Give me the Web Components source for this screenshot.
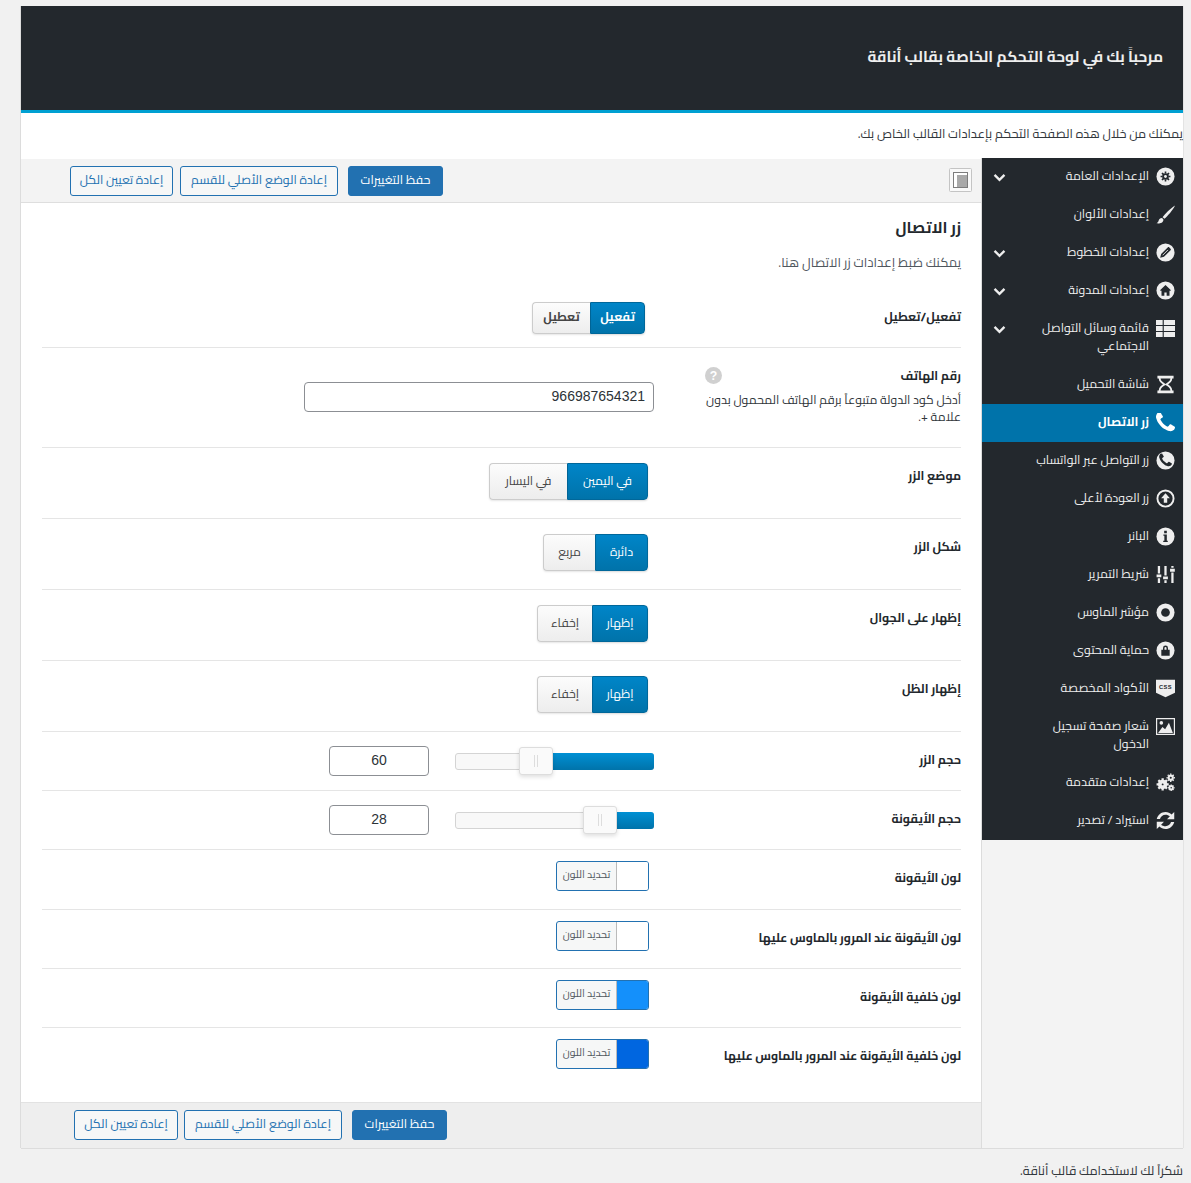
<!DOCTYPE html>
<html lang="ar" dir="rtl">
<head>
<meta charset="utf-8">
<title>لوحة التحكم</title>
<style>
  html, body { margin: 0; background: #f1f1f1; }
  body { font: 13px/18px Cairo, "Noto Sans Arabic", "DejaVu Sans", sans-serif; color: #23282d; }
</style>
</head>
<body>
<panel-page>
  <span slot="title">مرحباً بك في لوحة التحكم الخاصة بقالب أناقة</span>
  <span slot="intro">يمكنك من خلال هذه الصفحة التحكم بإعدادات القالب الخاص بك.</span>
  <side-menu slot="menu">
    <side-item icon="gear" arrow>الإعدادات العامة</side-item>
    <side-item icon="brush">إعدادات الألوان</side-item>
    <side-item icon="pencil" arrow>إعدادات الخطوط</side-item>
    <side-item icon="home" arrow>إعدادات المدونة</side-item>
    <side-item icon="list" arrow>قائمة وسائل التواصل الاجتماعي</side-item>
    <side-item icon="hourglass">شاشة التحميل</side-item>
    <side-item icon="phone" active>زر الاتصال</side-item>
    <side-item icon="phonec">زر التواصل عبر الواتساب</side-item>
    <side-item icon="up">زر العودة لأعلى</side-item>
    <side-item icon="info">البانر</side-item>
    <side-item icon="sliders">شريط التمرير</side-item>
    <side-item icon="dot">مؤشر الماوس</side-item>
    <side-item icon="lock">حماية المحتوى</side-item>
    <side-item icon="css">الأكواد المخصصة</side-item>
    <side-item icon="image">شعار صفحة تسجيل الدخول</side-item>
    <side-item icon="cogs">إعدادات متقدمة</side-item>
    <side-item icon="sync">استيراد / تصدير</side-item>
  </side-menu>

  <action-bar slot="topbar" toggle></action-bar>

  <section-head heading="زر الاتصال" desc="يمكنك ضبط إعدادات زر الاتصال هنا."></section-head>

  <opt-row label="تفعيل/تعطيل" pad="11 13" nudge="6">
    <seg-buttons options="تفعيل,تعطيل" widths="55,58" small></seg-buttons>
  </opt-row>
  <opt-row label="رقم الهاتف" help="أدخل كود الدولة متبوعاً برقم الهاتف المحمول بدون علامة +." pad="34 35">
    <text-box value="966987654321" style="width:350px" align="right"></text-box>
  </opt-row>
  <opt-row label="موضع الزر" pad="15 18" nudge="4"><seg-buttons options="في اليمين,في اليسار" widths="81,78"></seg-buttons></opt-row>
  <opt-row label="شكل الزر" pad="15 18" nudge="4"><seg-buttons options="دائرة,مربع" widths="53,52"></seg-buttons></opt-row>
  <opt-row label="إظهار على الجوال" pad="15 18" nudge="4"><seg-buttons options="إظهار,إخفاء" widths="56,55"></seg-buttons></opt-row>
  <opt-row label="إظهار الظل" pad="15 18" nudge="4"><seg-buttons options="إظهار,إخفاء" widths="56,55"></seg-buttons></opt-row>
  <opt-row label="حجم الزر" pad="14 14"><range-field value="60" fill="118"></range-field></opt-row>
  <opt-row label="حجم الأيقونة" pad="14 14"><range-field value="28" fill="54"></range-field></opt-row>
  <opt-row label="لون الأيقونة" pad="11 18" nudge="8"><color-field color="#ffffff"></color-field></opt-row>
  <opt-row label="لون الأيقونة عند المرور بالماوس عليها" pad="11 17" nudge="8"><color-field color="#ffffff"></color-field></opt-row>
  <opt-row label="لون خلفية الأيقونة" pad="11 17" nudge="8"><color-field color="#1490fb"></color-field></opt-row>
  <opt-row label="لون خلفية الأيقونة عند المرور بالماوس عليها" pad="11 33" nudge="8" last><color-field color="#0066e0"></color-field></opt-row>

  <action-bar slot="bottombar" bottom></action-bar>
  <span slot="footer">شكراً لك لاستخدامك قالب أناقة.</span>
</panel-page>

<script>
const FONT = 'Cairo, "Noto Sans Arabic", "DejaVu Sans", sans-serif';

// every icon is drawn on a 20x20 box, #eee on the dark menu
const DARK = '#23282d';
const dis = (inner) => `<circle cx="10" cy="10" r="9.5" fill="currentColor"/>${inner}`;
const PHONE = 'M1600 1240q0 27-10 70.5t-21 68.5q-21 50-122 106-94 51-186 51-27 0-53-3.5t-57.5-12.5-47-14.5-55.5-20.5-49-18q-98-35-175-83-127-79-264-216t-216-264q-48-77-83-175-3-9-18-49t-20.5-55.5-14.5-47-12.5-57.5-3.5-53q0-92 51-186 56-101 106-122 25-11 68.5-21t70.5-10q14 0 21 3 18 6 53 76 11 19 30 54t35 63.5 31 53.5q3 4 17.5 25t21.5 35.5 7 28.5q0 20-28.5 50t-62 55-62 53-28.5 46q0 9 5 22.5t8.5 20.5 14 24 11.5 19q76 137 174 235t235 174q2 1 19 11.5t24 14 20.5 8.5 22.5 5q18 0 46-28.5t53-62 55-62 50-28.5q14 0 28.5 7t35.5 21.5 25 17.5q25 15 53.5 31t63.5 35 54 30q70 35 76 53 3 7 3 21z';
const TEETH = 'M10 4.800v2M10 13.200v2M4.800 10h2M13.200 10h2M6.300 6.300l1.500 1.500M12.200 12.200l1.500 1.500M6.300 13.700l1.500-1.500M12.200 7.800l1.500-1.500';
const ICONS = {
  gear: dis(`<circle cx="10" cy="10" r="3.500" fill="${DARK}"/><path d="${TEETH}" stroke="${DARK}" stroke-width="1.700"/><circle cx="10" cy="10" r="1.500" fill="currentColor"/>`),
  brush: `<path d="M20 .4C15 3.800 9.300 9.200 6.900 12.800c.9.300 1.500.900 1.900 1.800C12.400 11 17.600 5.800 20 .4zM5.800 13.600C3.400 13.800 3 15.800 2.600 17c-.3.800-.9 1.500-2 2.300 3 .500 7-.300 7.200-3.500 0-1.100-.800-2-2-2.200z" fill="currentColor"/>`,
  pencil: dis(`<path d="M4.400 15.600l1-4 6.900-6.900c.5-.5 1.200-.5 1.700 0l1.300 1.300c.5.500.5 1.200 0 1.700l-6.900 6.900z" fill="${DARK}"/><path d="M7 12.900l5.600-5.600" stroke="currentColor" stroke-width=".9"/>`),
  home: dis(`<path d="M10 4.200L4.500 9.400v.8h1.300v5.200h3V12h2.400v3.400h3v-5.200h1.300v-.8z" fill="${DARK}"/>`),
  list: `<path d="M0 1h7v5.200H0zM8.200 1H20v5.200H8.200zM0 7.400h7v5.200H0zM8.200 7.400H20v5.200H8.200zM0 13.800h7V19H0zM8.200 13.800H20V19H8.200z" fill="currentColor"/>`,
  hourglass: `<path fill-rule="evenodd" d="M1.500 .8h17v3h-1.400c0 3-2.400 4.800-4.400 6.200 2 1.400 4.400 3.200 4.400 6.200h1.400v3h-17v-3h1.400c0-3 2.400-4.800 4.400-6.200-2-1.400-4.400-3.200-4.400-6.200H1.500zM4.800 3.800C4.800 6.300 7.700 8 10 9.500c2.300-1.500 5.200-3.200 5.200-5.700zM10 10.500C7.700 12 4.800 13.700 4.800 16.200h10.400c0-2.500-2.900-4.200-5.200-5.700z" fill="currentColor"/>`,
  phone: `<path transform="translate(-2.730 -2.730) scale(.0142)" d="${PHONE}" fill="currentColor"/>`,
  phonec: dis(`<path transform="translate(1.490 1.490) scale(.0095)" d="${PHONE}" fill="${DARK}"/>`),
  up: `<circle cx="10" cy="10" r="8.500" fill="none" stroke="currentColor" stroke-width="2"/><path d="M10 4.600l4.600 5.200h-2.800v4.800H8.200V9.800H5.400z" fill="currentColor"/>`,
  info: dis(`<path d="M8.600 4h2.800v2.600H8.600zM7.800 8h3.600v6.600h1v1.200H7.600v-1.200h1.200V9.200h-1z" fill="${DARK}"/>`),
  sliders: `<path d="M.6 10h5v3h-5zM1.900 1h2.400v8H1.900zM1.900 14h2.400v5H1.900zM7.500 12h5v3h-5zM8.800 1h2.400v10H8.800zM8.800 16h2.400v3H8.800zM14.800 4h5v3h-5zM16.100 1h2.400v2h-2.400zM16.100 8h2.400v11h-2.400z" fill="currentColor"/>`,
  dot: dis(`<circle cx="10" cy="10" r="4.600" fill="${DARK}"/>`),
  lock: dis(`<path d="M5.600 9.200h8.800v6.200H5.600zM7.400 9.200V7.400a2.600 2.600 0 0 1 5.200 0v1.800" fill="${DARK}"/><path d="M8.900 9.200V7.500a1.100 1.100 0 0 1 2.200 0v1.700z" fill="currentColor"/>`),
  css: `<path d="M0 .8h20v13.800l-10 4.600-10-4.600z" fill="currentColor"/><text x="10" y="10" text-anchor="middle" font-size="6" font-weight="700" letter-spacing=".5" font-family="Liberation Sans" fill="${DARK}">CSS</text>`,
  image: `<path d="M.6 1.600h18.800v16.800H.6z" fill="none" stroke="currentColor" stroke-width="1.300"/><path d="M2.200 16.800l4.600-6.400 2.800 2.600 4-7 4.200 10.800z" fill="currentColor"/><circle cx="5.600" cy="6.200" r="1.900" fill="currentColor"/>`,
  cogs: `<circle cx="7" cy="12" r="3" fill="none" stroke="currentColor" stroke-width="4"/><path d="M7 5.600v2.400M7 16v2.400M.600 12H3M11 12h2.400M2.500 7.500L4.200 9.200M9.800 14.800l1.700 1.700M2.500 16.500l1.700-1.700M9.800 9.200l1.700-1.700" stroke="currentColor" stroke-width="2.400"/><circle cx="15.500" cy="5" r="2.200" fill="none" stroke="currentColor" stroke-width="2.200"/><path d="M15.500 .6v1.200M15.500 8.200v1.200M11.100 5h1.200M18.700 5h1.200M12.400 1.900l.9.9M17.700 7.200l.9.9M12.400 8.100l.9-.9M17.700 2.800l.9-.9" stroke="currentColor" stroke-width="1.500"/><circle cx="16" cy="15.500" r="1.800" fill="none" stroke="currentColor" stroke-width="1.900"/><path d="M16 12v1M16 18v1M12.500 15.500h1M18.500 15.500h1M13.600 13.100l.7.700M17.700 17.200l.7.700M13.600 17.900l.7-.7M17.700 13.800l.7-.7" stroke="currentColor" stroke-width="1.400"/>`,
  sync: `<path d="M.8 8.400C1.800 4 5.600 1 10 1c2.600 0 4.800 1 6.400 2.600L19.200 1v7.600h-7.600l3-3C13.400 4.600 11.800 4 10 4 7.200 4 5 5.800 4.200 8.400zM19.200 11.600C18.200 16 14.400 19 10 19c-2.600 0-4.800-1-6.400-2.600L.8 19v-7.600h7.600l-3 3c1.200 1 2.800 1.600 4.600 1.600 2.800 0 5-1.800 5.800-4.400z" fill="currentColor"/>`
};

function shadowOf(el, html) {
  const root = el.attachShadow({ mode: 'open' });
  root.innerHTML = html;
  return root;
}

class PanelPage extends HTMLElement {
  constructor() {
    super();
    shadowOf(this, `
    <style>
      :host { display: block; margin: 6px 8px 0 0; width: 1162px; font-family: ${FONT}; }
      .wrap { box-shadow: -1px 0 0 #dcdcdc, 1px 0 0 #e3e3e3, 0 1px 0 #dcdcdc; }
      header { background: #23282d; border-bottom: 3px solid #00a0d2; height: 104px; box-sizing: content-box; display: flex; align-items: center; padding: 0 20px; color: #eee; font-size: 15.3px; font-weight: 700; }
      header slot { display: block; margin-top: -2px; }
      .intro { background: #fff; height: 45px; display: flex; align-items: center; font-size: 12.6px; color: #32373c; padding-bottom: 4px; box-sizing: border-box; }
      .body { display: grid; grid-template-columns: 201px 961px; }
      .side { background: #f3f3f3; box-shadow: -1px 0 0 #dcdcdc; position: relative; }
      main { background: #fff; display: flex; flex-direction: column; padding-top: 1px; }
      .rows { padding: 0 21px; flex: 1; }
      footer { font-size: 12.65px; color: #32373c; margin-top: 14px; height: 21px; line-height: 18px; }
    </style>
    <div class="wrap">
      <header><slot name="title"></slot></header>
      <div class="intro"><slot name="intro"></slot></div>
      <div class="body">
        <div class="side"><slot name="menu"></slot></div>
        <main>
          <slot name="topbar"></slot>
          <div class="rows"><slot></slot></div>
          <slot name="bottombar"></slot>
        </main>
      </div>
    </div>
    <footer><slot name="footer"></slot></footer>`);
  }
}

class SideMenu extends HTMLElement {
  constructor() {
    super();
    shadowOf(this, `<style>:host { display: block; background: #23282d; }</style><slot></slot>`);
  }
}

class SideItem extends HTMLElement {
  constructor() {
    super();
    const icon = ICONS[this.getAttribute('icon')] || '';
    const arrow = this.hasAttribute('arrow')
      ? `<svg class="arrow" viewBox="0 0 14 10" width="13" height="9"><path d="M1.500 2l5.500 5.500L12.500 2" fill="none" stroke="currentColor" stroke-width="2.600"/></svg>`
      : '';
    shadowOf(this, `
    <style>
      :host { display: block; color: #eee; font-size: 12.3px; line-height: 18px; }
      :host([active]) { background: #0073aa; color: #fff; font-weight: 700; }
      .item { display: flex; align-items: flex-start; padding: 10px 8px 10px 0; position: relative; min-height: 18px; }
      .ic { width: 19px; height: 19px; margin: -1px 0 0 7px; flex: none; }
      .txt { width: 125px; margin: -1px 0 1px; }
      .arrow { position: absolute; left: 11px; top: 15px; }
    </style>
    <div class="item"><svg class="ic" viewBox="0 0 20 20">${icon}</svg><div class="txt"><slot></slot></div>${arrow}</div>`);
  }
}

class ActionBar extends HTMLElement {
  constructor() {
    super();
    const bottom = this.hasAttribute('bottom');
    const toggle = this.hasAttribute('toggle')
      ? `<svg class="tg" viewBox="0 0 23 24" width="23" height="24"><rect x=".5" y=".5" width="22" height="23" rx="1" fill="#f9f9f9" stroke="#c4c4c4"/><rect x="4.500" y="4.500" width="14" height="15" fill="#fff" stroke="#7d7d7d"/><rect x="8" y="7" width="10" height="12" fill="#a9a9a9"/></svg>` : '';
    shadowOf(this, `
    <style>
      :host { display: block; }
      .bar { display: flex; align-items: flex-start; height: ${bottom ? 46 : 44}px; box-sizing: border-box; padding-top: 7px; background: ${bottom ? '#eee' : '#f3f3f3'};
             ${bottom ? 'border-top: 1px solid #e2e2e2; padding-right: 535px;' : 'border-bottom: 1px solid #dedede; padding-right: 10px;'} }
      .tg { flex: none; margin-top: 2px; }
      .btns { display: flex; gap: ${bottom ? 6 : 7}px; ${bottom ? '' : 'margin-right: 506px;'} }
      a { display: block; box-sizing: border-box; height: 30px; line-height: 26px; text-align: center; font-size: 12.4px; border-radius: 3px; border: 1px solid #2271b1; color: #2271b1; background: #f6f7f7; white-space: nowrap; }
      a.primary { background: #2271b1; color: #fff; width: 95px; margin-left: ${bottom ? 4 : 3}px; }
      a.sec { width: 158px; }
      a.all { width: ${bottom ? 104 : 103}px; }
    </style>
    <div class="bar">${toggle}<div class="btns"><a class="primary">حفظ التغييرات</a><a class="sec">إعادة الوضع الأصلي للقسم</a><a class="all">إعادة تعيين الكل</a></div></div>`);
  }
}

class SectionHead extends HTMLElement {
  constructor() {
    super();
    shadowOf(this, `
    <style>
      :host { display: block; padding-top: 14px; height: 74px; }
      h3 { margin: 0; font-size: 15.8px; line-height: 20px; font-weight: 700; color: #23282d; }
      p { margin: 16px 0 0; font-size: 13px; line-height: 18px; color: #50575e; }
    </style>
    <h3>${this.getAttribute('heading')}</h3><p>${this.getAttribute('desc')}</p>`);
  }
}

class OptRow extends HTMLElement {
  constructor() {
    super();
    const [top, bottom] = (this.getAttribute('pad') || '15 15').split(' ');
    const help = this.getAttribute('help');
    const nudge = this.getAttribute('nudge') || 5;
    shadowOf(this, `
    <style>
      :host { display: block; border-bottom: 1px solid #e5e5e5; }
      :host([last]) { border-bottom: 0; }
      .row { display: grid; grid-template-columns: 307px 1fr; padding: ${top}px 0 ${bottom}px; position: relative; }
      .lab { position: relative; font-size: 12.2px; font-weight: 700; color: #23282d; line-height: 18px; width: 256px; white-space: nowrap; }
      .top { display: block; padding-top: ${nudge}px; }
      .help { position: absolute; top: 29px; right: 0; font-size: 12.25px; font-weight: 400; line-height: 17px; color: #32373c; width: 256px; white-space: normal; }
      .q { position: absolute; top: 5px; left: 0; }
      .ctl { display: flex; justify-content: flex-start; }
    </style>
    <div class="row"><div class="lab"><span class="top">${this.getAttribute('label')}</span></div><div class="ctl"><slot></slot></div></div>`);
    if (help) {
      const lab = this.shadowRoot.querySelector('.lab');
      lab.insertAdjacentHTML('beforeend', `<svg class="q" viewBox="0 0 18 18" width="17" height="17"><circle cx="9" cy="9" r="9" fill="#d0d0d0"/><text x="9" y="13.500" text-anchor="middle" font-size="13" font-weight="700" font-family="Liberation Sans" fill="#fff">?</text></svg><div class="help">${help}</div>`);
      lab.style.marginTop = '-20px';
    }
  }
}

class SegButtons extends HTMLElement {
  constructor() {
    super();
    const small = this.hasAttribute('small');
    const [on, off] = this.getAttribute('options').split(',');
    const [onW, offW] = this.getAttribute('widths').split(',');
    shadowOf(this, `
    <style>
      :host { display: flex; margin-right: ${small ? 9 : 6}px; }
      span { display: block; box-sizing: border-box; text-align: center; height: ${small ? 32 : 37}px; line-height: ${small ? 28 : 34}px; font-size: 12.2px; border: 1px solid; }
      .on { width: ${onW}px; background: linear-gradient(#0085c8, #0073aa); border-color: #00679a; color: #fff; border-radius: 0 4px 4px 0; box-shadow: 0 1px 2px rgba(0,0,0,.15); }
      .off { width: ${offW}px; background: linear-gradient(#fcfcfc, #ededed); border-color: #ccc; border-right: 0; color: #444; border-radius: 4px 0 0 4px; box-shadow: 0 1px 2px rgba(0,0,0,.1); }
      :host([small]) span { font-weight: 700; }
    </style>
    <span class="on">${on}</span><span class="off">${off}</span>`);
  }
}

class TextBox extends HTMLElement {
  constructor() {
    super();
    shadowOf(this, `
    <style>
      :host { display: block; width: 100px; height: 30px; box-sizing: border-box; border: 1px solid #8c8f94; border-radius: 4px; background: #fff; font: 14px/27px "Liberation Sans", sans-serif; color: #2c3338; text-align: center; direction: ltr; padding: 0 8px; }
      :host([align=right]) { text-align: right; }
    </style>
    ${this.getAttribute('value')}`);
  }
}

class RangeField extends HTMLElement {
  constructor() {
    super();
    const fill = +this.getAttribute('fill');
    shadowOf(this, `
    <style>
      :host { display: flex; align-items: center; width: 325px; height: 30px; justify-content: space-between; }
      .track { position: relative; width: 199px; height: 17px; box-sizing: border-box; background: #f8f8f8; border: 1px solid #d4d4d4; border-radius: 3px; margin-top: 1px; }
      .fill { position: absolute; top: -1px; bottom: -1px; right: -1px; width: ${fill}px; background: linear-gradient(#0090d4, #0073aa); border-radius: 3px; }
      .handle { position: absolute; top: -7px; right: ${fill - 18}px; width: 34px; height: 28px; box-sizing: border-box; background: #fafafa; border: 1px solid #ddd; border-radius: 3px; box-shadow: 0 2px 4px rgba(0,0,0,.13); }
      .handle::after { content: ""; position: absolute; left: 14px; top: 7px; width: 2px; height: 12px; border-left: 1px solid #ddd; border-right: 1px solid #ddd; }
    </style>
    <div class="track"><div class="fill"></div><div class="handle"></div></div>
    <text-box value="${this.getAttribute('value')}"></text-box>`);
  }
}

class ColorField extends HTMLElement {
  constructor() {
    super();
    shadowOf(this, `
    <style>
      :host { display: flex; margin-right: 5px; width: 93px; height: 30px; box-sizing: border-box; border: 1px solid #2271b1; border-radius: 3px; overflow: hidden; background: #f6f7f7; }
      i { display: block; width: 31px; background: ${this.getAttribute('color')}; border-left: 1px solid #bbb; }
      span { flex: 1; text-align: center; font-size: 10.5px; line-height: 25px; color: #50575e; white-space: nowrap; }
    </style>
    <i></i><span>تحديد اللون</span>`);
  }
}

customElements.define('side-menu', SideMenu);
customElements.define('side-item', SideItem);
customElements.define('action-bar', ActionBar);
customElements.define('section-head', SectionHead);
customElements.define('opt-row', OptRow);
customElements.define('seg-buttons', SegButtons);
customElements.define('text-box', TextBox);
customElements.define('range-field', RangeField);
customElements.define('color-field', ColorField);
customElements.define('panel-page', PanelPage);
</script>
</body>
</html>
